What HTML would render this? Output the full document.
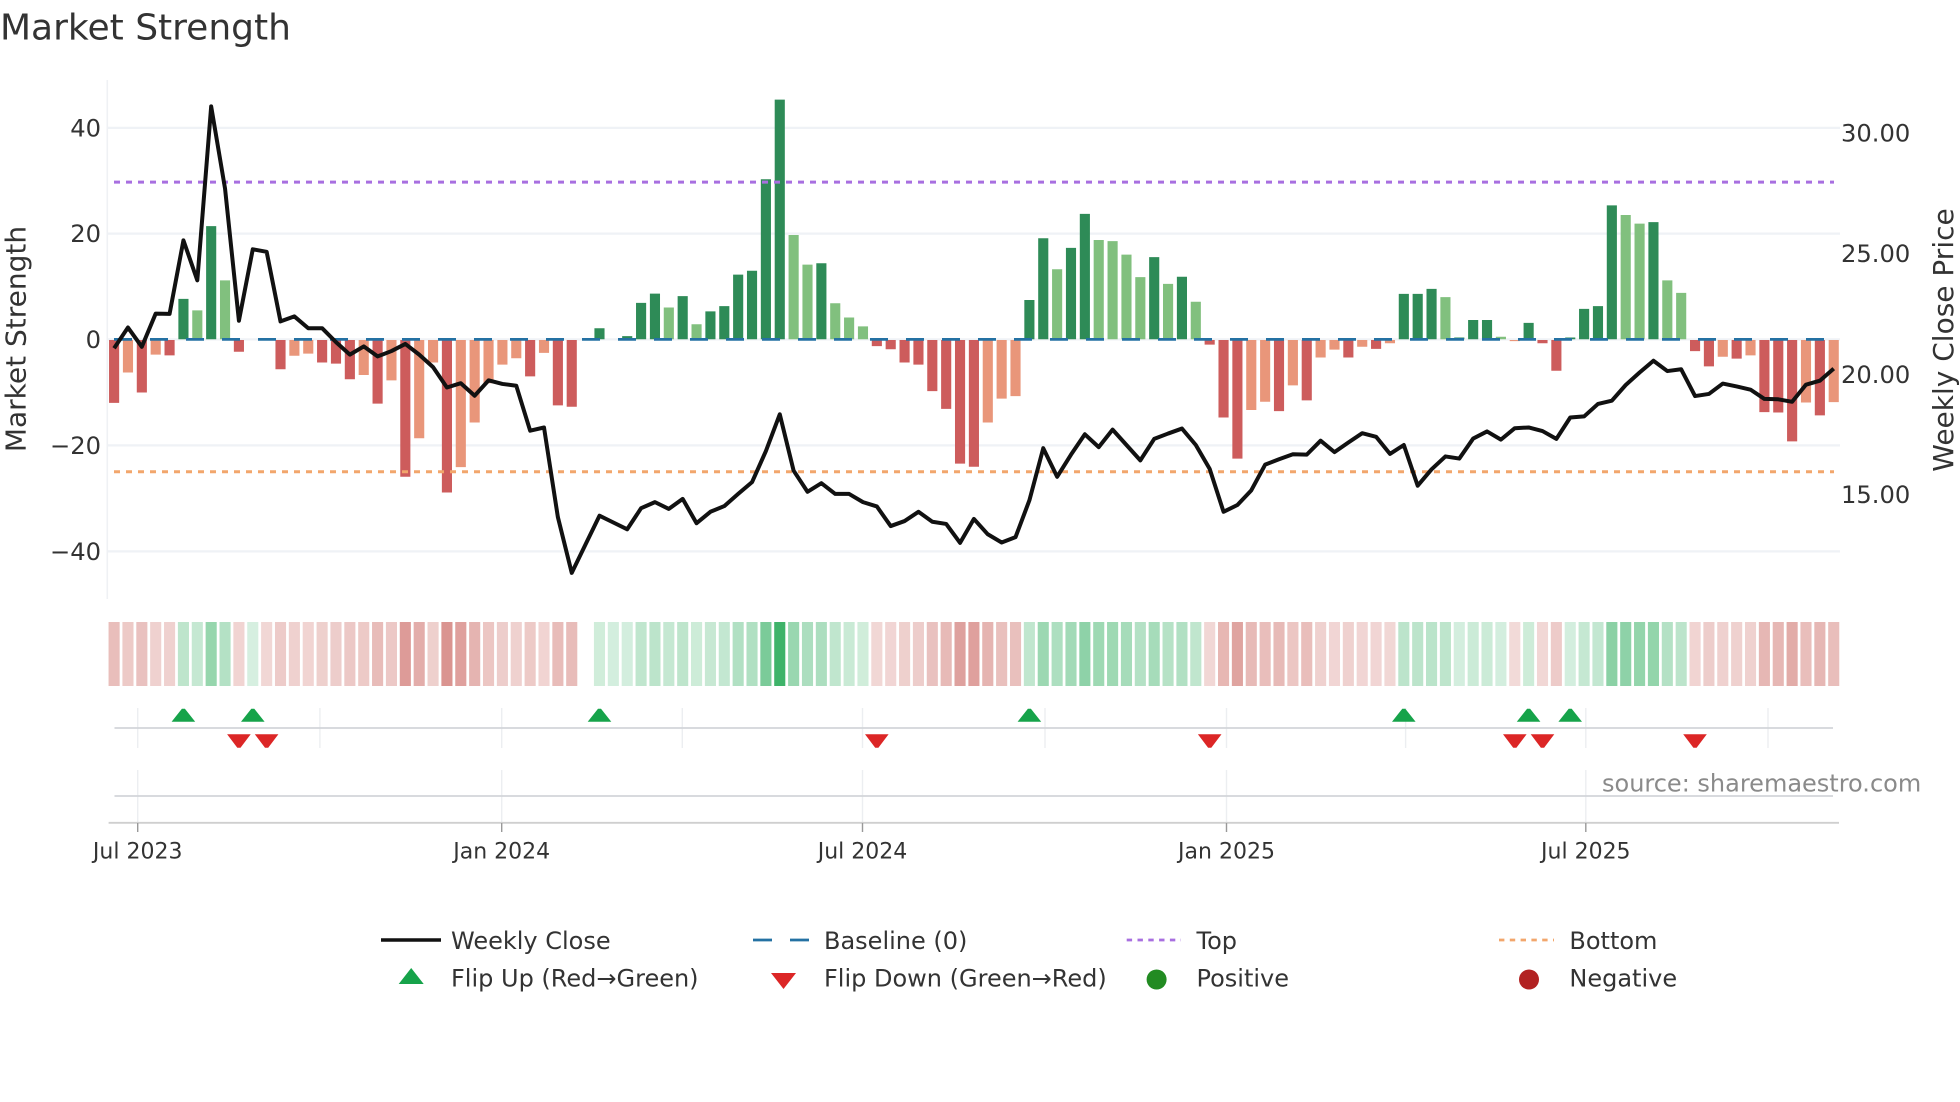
<!DOCTYPE html>
<html><head><meta charset="utf-8"><title>Market Strength</title>
<style>
html,body{margin:0;padding:0;background:#fff}
svg{display:block}
text{font-family:"DejaVu Sans","Liberation Sans",sans-serif;fill:#333}
.x{font-size:22px;text-anchor:middle}
</style></head><body>
<svg width="1960" height="1102" viewBox="0 0 1960 1102" xmlns="http://www.w3.org/2000/svg">
<rect width="1960" height="1102" fill="#fff"/>
<text x="0" y="39.5" style="font-size:36px">Market Strength</text>

<!-- gridlines -->
<g stroke="#eff2f6" stroke-width="2.2" fill="none">
<path d="M108 127.9H1840M108 233.6H1840M108 339.4H1840M108 445.4H1840M108 551.4H1840"/>
</g>
<path d="M107.3 80V599" stroke="#eff1f4" stroke-width="1.6"/>

<!-- bars: x = bar index, y = scaled -->
<g transform="translate(114.1,60) scale(13.868,0.35714)">
<g transform="translate(-.365,0)">
<path fill="#2e8b57" d="M5 669h.73V782h-.73zM7 465h.73V782h-.73zM35 751h.73V782h-.73zM37 773h.73V782h-.73zM38 680h.73V782h-.73zM39 654h.73V782h-.73zM41 661h.73V782h-.73zM43 704h.73V782h-.73zM44 689h.73V782h-.73zM45 601h.73V782h-.73zM46 590h.73V782h-.73zM47 334h.73V782h-.73zM48 111h.73V782h-.73zM51 569h.73V782h-.73zM66 672h.73V782h-.73zM67 499h.73V782h-.73zM69 526h.73V782h-.73zM70 431h.73V782h-.73zM75 552h.73V782h-.73zM77 607h.73V782h-.73zM93 655h.73V782h-.73zM94 655h.73V782h-.73zM95 641h.73V782h-.73zM97 777h.73V782h-.73zM98 728h.73V782h-.73zM99 728h.73V782h-.73zM102 736h.73V782h-.73zM105 777h.73V782h-.73zM106 697h.73V782h-.73zM107 689h.73V782h-.73zM108 407h.73V782h-.73zM111 454h.73V782h-.73z"/>
<path fill="#81c07e" d="M6 701h.73V782h-.73zM8 617h.73V782h-.73zM40 693h.73V782h-.73zM42 740h.73V782h-.73zM49 490h.73V782h-.73zM50 573h.73V782h-.73zM52 681h.73V782h-.73zM53 721h.73V782h-.73zM54 746h.73V782h-.73zM68 586h.73V782h-.73zM71 504h.73V782h-.73zM72 507h.73V782h-.73zM73 545h.73V782h-.73zM74 608h.73V782h-.73zM76 627h.73V782h-.73zM78 677h.73V782h-.73zM96 664h.73V782h-.73zM100 775h.73V782h-.73zM109 434h.73V782h-.73zM110 458h.73V782h-.73zM112 617h.73V782h-.73zM113 652h.73V782h-.73z"/>
<path fill="#cd5c5c" d="M0 784h.73V960h-.73zM2 784h.73V931h-.73zM4 784h.73V827h-.73zM9 784h.73V817h-.73zM12 784h.73V866h-.73zM15 784h.73V847h-.73zM16 784h.73V850h-.73zM17 784h.73V894h-.73zM19 784h.73V962h-.73zM21 784h.73V1167h-.73zM24 784h.73V1211h-.73zM30 784h.73V886h-.73zM32 784h.73V967h-.73zM33 784h.73V971h-.73zM55 784h.73V801h-.73zM56 784h.73V810h-.73zM57 784h.73V847h-.73zM58 784h.73V853h-.73zM59 784h.73V927h-.73zM60 784h.73V977h-.73zM61 784h.73V1130h-.73zM62 784h.73V1139h-.73zM79 784h.73V797h-.73zM80 784h.73V1001h-.73zM81 784h.73V1116h-.73zM84 784h.73V983h-.73zM86 784h.73V953h-.73zM89 784h.73V833h-.73zM91 784h.73V809h-.73zM103 784h.73V793h-.73zM104 784h.73V870h-.73zM114 784h.73V815h-.73zM115 784h.73V858h-.73zM117 784h.73V836h-.73zM119 784h.73V986h-.73zM120 784h.73V987h-.73zM121 784h.73V1068h-.73zM123 784h.73V995h-.73z"/>
<path fill="#e9967a" d="M1 784h.73V875h-.73zM3 784h.73V825h-.73zM13 784h.73V828h-.73zM14 784h.73V822h-.73zM18 784h.73V882h-.73zM20 784h.73V897h-.73zM22 784h.73V1059h-.73zM23 784h.73V847h-.73zM25 784h.73V1140h-.73zM26 784h.73V1015h-.73zM27 784h.73V905h-.73zM28 784h.73V853h-.73zM29 784h.73V835h-.73zM31 784h.73V820h-.73zM63 784h.73V1015h-.73zM64 784h.73V948h-.73zM65 784h.73V941h-.73zM82 784h.73V980h-.73zM83 784h.73V957h-.73zM85 784h.73V911h-.73zM87 784h.73V833h-.73zM88 784h.73V811h-.73zM90 784h.73V803h-.73zM92 784h.73V793h-.73zM101 784h.73V787h-.73zM116 784h.73V831h-.73zM118 784h.73V827h-.73zM122 784h.73V959h-.73zM124 784h.73V958h-.73z"/>
</g>
</g>

<!-- baseline + top + bottom lines -->
<path d="M114 339.4H1834" stroke="#2471a3" stroke-width="2.8" stroke-dasharray="18 18" fill="none"/>
<path d="M114 182.1H1834" stroke="#a86fe0" stroke-width="3" stroke-dasharray="6 6" fill="none"/>
<path d="M114 471.8H1834" stroke="#f2a66c" stroke-width="3" stroke-dasharray="6 6" fill="none"/>

<!-- weekly close line -->
<g transform="translate(114.1,60) scale(13.868,0.35714)">
<polyline vector-effect="non-scaling-stroke" fill="none" stroke="#111" stroke-width="4" stroke-linejoin="round" points="0,807 1,749 2,803 3,710 4,711 5,505 6,617 7,130 8,360 9,730 10,530 11,537 12,732 13,718 14,751 15,751 16,790 17,825 18,802 19,830 20,815 21,795 22,825 23,860 24,917 25,905 26,940 27,897 28,907 29,912 30,1038 31,1029 32,1280 33,1436 34,1356 35,1276 36,1295 37,1314 38,1255 39,1238 40,1257 41,1229 42,1297 43,1265 44,1249 45,1215 46,1182 47,1095 48,992 49,1150 50,1209 51,1185 52,1215 53,1215 54,1238 55,1250 56,1305 57,1291 58,1265 59,1293 60,1299 61,1352 62,1285 63,1328 64,1351 65,1336 66,1233 67,1087 68,1167 69,1105 70,1048 71,1084 72,1035 73,1078 74,1121 75,1061 76,1046 77,1032 78,1078 79,1145 80,1265 81,1246 82,1205 83,1133 84,1118 85,1104 86,1105 87,1066 88,1098 89,1071 90,1045 91,1055 92,1103 93,1078 94,1192 95,1146 96,1110 97,1116 98,1060 99,1040 100,1063 101,1031 102,1029 103,1039 104,1061 105,1001 106,998 107,963 108,954 109,910 110,875 111,842 112,871 113,866 114,941 115,935 116,906 117,914 118,923 119,949 120,950 121,957 122,909 123,898 124,864"/>
</g>

<!-- axis labels -->
<g style="font-size:24.2px;text-anchor:end">
<text x="101" y="136.4">40</text>
<text x="101" y="242.1">20</text>
<text x="101" y="347.9">0</text>
<text x="101" y="453.9">−20</text>
<text x="101" y="559.9">−40</text>
</g>
<g style="font-size:24.2px">
<text x="1841" y="141.6">30.00</text>
<text x="1841" y="262.2">25.00</text>
<text x="1841" y="382.8">20.00</text>
<text x="1841" y="503.2">15.00</text>
</g>
<text transform="translate(25.4,339) rotate(-90)" style="font-size:28px;text-anchor:middle">Market Strength</text>
<text transform="translate(1953,340) rotate(-90)" style="font-size:28px;text-anchor:middle">Weekly Close Price</text>

<!-- heat strip -->
<g transform="translate(114.1,622) scale(13.868,1)">
<g fill="#b5281f" opacity=".92">
<path d="M-.4 0h.8v64h-.8z" opacity=".33"/><path d="M.6 0h.8v64h-.8z" opacity=".27"/><path d="M1.6 0h.8v64h-.8z" opacity=".31"/><path d="M2.6 0h.8v64h-.8z" opacity=".23"/><path d="M3.6 0h.8v64h-.8z" opacity=".23"/>
<path d="M8.6 0h.8v64h-.8z" opacity=".22"/><path d="M10.6 0h.8v64h-.8z" opacity=".2"/><path d="M11.6 0h.8v64h-.8z" opacity=".26"/><path d="M12.6 0h.8v64h-.8z" opacity=".23"/><path d="M13.6 0h.8v64h-.8z" opacity=".22"/><path d="M14.6 0h.8v64h-.8z" opacity=".24"/><path d="M15.6 0h.8v64h-.8z" opacity=".25"/><path d="M16.6 0h.8v64h-.8z" opacity=".28"/><path d="M17.6 0h.8v64h-.8z" opacity=".27"/><path d="M18.6 0h.8v64h-.8z" opacity=".34"/><path d="M19.6 0h.8v64h-.8z" opacity=".28"/><path d="M20.6 0h.8v64h-.8z" opacity=".5"/><path d="M21.6 0h.8v64h-.8z" opacity=".41"/><path d="M22.6 0h.8v64h-.8z" opacity=".24"/><path d="M23.6 0h.8v64h-.8z" opacity=".54"/><path d="M24.6 0h.8v64h-.8z" opacity=".48"/><path d="M25.6 0h.8v64h-.8z" opacity=".38"/><path d="M26.6 0h.8v64h-.8z" opacity=".29"/><path d="M27.6 0h.8v64h-.8z" opacity=".25"/><path d="M28.6 0h.8v64h-.8z" opacity=".23"/><path d="M29.6 0h.8v64h-.8z" opacity=".27"/><path d="M30.6 0h.8v64h-.8z" opacity=".22"/><path d="M31.6 0h.8v64h-.8z" opacity=".34"/><path d="M32.6 0h.8v64h-.8z" opacity=".34"/>
<path d="M54.6 0h.8v64h-.8z" opacity=".2"/><path d="M55.6 0h.8v64h-.8z" opacity=".21"/><path d="M56.6 0h.8v64h-.8z" opacity=".24"/><path d="M57.6 0h.8v64h-.8z" opacity=".25"/><path d="M58.6 0h.8v64h-.8z" opacity=".31"/><path d="M59.6 0h.8v64h-.8z" opacity=".35"/><path d="M60.6 0h.8v64h-.8z" opacity=".47"/><path d="M61.6 0h.8v64h-.8z" opacity=".48"/><path d="M62.6 0h.8v64h-.8z" opacity=".38"/><path d="M63.6 0h.8v64h-.8z" opacity=".32"/><path d="M64.6 0h.8v64h-.8z" opacity=".32"/>
<path d="M78.6 0h.8v64h-.8z" opacity=".2"/><path d="M79.6 0h.8v64h-.8z" opacity=".37"/><path d="M80.6 0h.8v64h-.8z" opacity=".46"/><path d="M81.6 0h.8v64h-.8z" opacity=".35"/><path d="M82.6 0h.8v64h-.8z" opacity=".33"/><path d="M83.6 0h.8v64h-.8z" opacity=".35"/><path d="M84.6 0h.8v64h-.8z" opacity=".29"/><path d="M85.6 0h.8v64h-.8z" opacity=".33"/><path d="M86.6 0h.8v64h-.8z" opacity=".23"/><path d="M87.6 0h.8v64h-.8z" opacity=".21"/><path d="M88.6 0h.8v64h-.8z" opacity=".23"/><path d="M89.6 0h.8v64h-.8z" opacity=".21"/><path d="M90.6 0h.8v64h-.8z" opacity=".21"/><path d="M91.6 0h.8v64h-.8z" opacity=".2"/>
<path d="M100.6 0h.8v64h-.8z" opacity=".19"/><path d="M102.6 0h.8v64h-.8z" opacity=".2"/><path d="M103.6 0h.8v64h-.8z" opacity=".26"/>
<path d="M113.6 0h.8v64h-.8z" opacity=".22"/><path d="M114.6 0h.8v64h-.8z" opacity=".25"/><path d="M115.6 0h.8v64h-.8z" opacity=".23"/><path d="M116.6 0h.8v64h-.8z" opacity=".23"/><path d="M117.6 0h.8v64h-.8z" opacity=".23"/><path d="M118.6 0h.8v64h-.8z" opacity=".36"/><path d="M119.6 0h.8v64h-.8z" opacity=".36"/><path d="M120.6 0h.8v64h-.8z" opacity=".42"/><path d="M121.6 0h.8v64h-.8z" opacity=".33"/><path d="M122.6 0h.8v64h-.8z" opacity=".36"/><path d="M123.6 0h.8v64h-.8z" opacity=".33"/>
</g>
<g fill="#16a34a" opacity=".92">
<path d="M4.6 0h.8v64h-.8z" opacity=".3"/><path d="M5.6 0h.8v64h-.8z" opacity=".27"/><path d="M6.6 0h.8v64h-.8z" opacity=".49"/><path d="M7.6 0h.8v64h-.8z" opacity=".35"/><path d="M9.6 0h.8v64h-.8z" opacity=".19"/>
<path d="M34.6 0h.8v64h-.8z" opacity=".22"/><path d="M35.6 0h.8v64h-.8z" opacity=".2"/><path d="M36.6 0h.8v64h-.8z" opacity=".2"/><path d="M37.6 0h.8v64h-.8z" opacity=".29"/><path d="M38.6 0h.8v64h-.8z" opacity=".31"/><path d="M39.6 0h.8v64h-.8z" opacity=".27"/><path d="M40.6 0h.8v64h-.8z" opacity=".3"/><path d="M41.6 0h.8v64h-.8z" opacity=".23"/><path d="M42.6 0h.8v64h-.8z" opacity=".26"/><path d="M43.6 0h.8v64h-.8z" opacity=".28"/><path d="M44.6 0h.8v64h-.8z" opacity=".36"/><path d="M45.6 0h.8v64h-.8z" opacity=".37"/><path d="M46.6 0h.8v64h-.8z" opacity=".61"/><path d="M47.6 0h.8v64h-.8z" opacity=".9"/><path d="M48.6 0h.8v64h-.8z" opacity=".47"/><path d="M49.6 0h.8v64h-.8z" opacity=".39"/><path d="M50.6 0h.8v64h-.8z" opacity=".39"/><path d="M51.6 0h.8v64h-.8z" opacity=".29"/><path d="M52.6 0h.8v64h-.8z" opacity=".25"/><path d="M53.6 0h.8v64h-.8z" opacity=".22"/>
<path d="M65.6 0h.8v64h-.8z" opacity=".29"/><path d="M66.6 0h.8v64h-.8z" opacity=".46"/><path d="M67.6 0h.8v64h-.8z" opacity=".38"/><path d="M68.6 0h.8v64h-.8z" opacity=".43"/><path d="M69.6 0h.8v64h-.8z" opacity=".52"/><path d="M70.6 0h.8v64h-.8z" opacity=".45"/><path d="M71.6 0h.8v64h-.8z" opacity=".45"/><path d="M72.6 0h.8v64h-.8z" opacity=".41"/><path d="M73.6 0h.8v64h-.8z" opacity=".35"/><path d="M74.6 0h.8v64h-.8z" opacity=".41"/><path d="M75.6 0h.8v64h-.8z" opacity=".34"/><path d="M76.6 0h.8v64h-.8z" opacity=".36"/><path d="M77.6 0h.8v64h-.8z" opacity=".29"/>
<path d="M92.6 0h.8v64h-.8z" opacity=".31"/><path d="M93.6 0h.8v64h-.8z" opacity=".31"/><path d="M94.6 0h.8v64h-.8z" opacity=".32"/><path d="M95.6 0h.8v64h-.8z" opacity=".3"/><path d="M96.6 0h.8v64h-.8z" opacity=".2"/><path d="M97.6 0h.8v64h-.8z" opacity=".24"/><path d="M98.6 0h.8v64h-.8z" opacity=".24"/><path d="M99.6 0h.8v64h-.8z" opacity=".2"/>
<path d="M101.6 0h.8v64h-.8z" opacity=".23"/><path d="M104.6 0h.8v64h-.8z" opacity=".2"/><path d="M105.6 0h.8v64h-.8z" opacity=".27"/><path d="M106.6 0h.8v64h-.8z" opacity=".28"/><path d="M107.6 0h.8v64h-.8z" opacity=".54"/><path d="M108.6 0h.8v64h-.8z" opacity=".52"/><path d="M109.6 0h.8v64h-.8z" opacity=".5"/><path d="M110.6 0h.8v64h-.8z" opacity=".5"/><path d="M111.6 0h.8v64h-.8z" opacity=".35"/><path d="M112.6 0h.8v64h-.8z" opacity=".31"/>
</g>
</g>

<!-- flip subplot grid -->
<path fill="none" stroke="#eceef1" stroke-width="1.4" d="M137.7 708V748M319.9 708V748M501.7 708V748M682.3 708V748M862.5 708V748M1045 708V748M1226.5 708V748M1405.6 708V748M1585.8 708V748M1768 708V748"/>
<path fill="none" stroke="#eceef1" stroke-width="1.4" d="M137.7 770V823M501.7 770V823M862.5 770V823M1226.5 770V823M1585.8 770V823"/>
<path fill="none" stroke="#d2d5d9" stroke-width="1.8" d="M114.5 728H1833M114.5 796H1833"/>
<path fill="none" stroke="#cfcfcf" stroke-width="1.8" d="M108.6 822.8H1839"/>
<path fill="none" stroke="#999" stroke-width="1.4" d="M137.7 823V832M501.7 823V832M862.5 823V832M1226.5 823V832M1585.8 823V832"/>

<!-- flip triangles -->
<path fill="#16a34a" d="M171.6 721.7l10.3-13h3l10.3 13zM241 721.7l10.3-13h3l10.3 13zM587.7 721.7l10.3-13h3l10.3 13zM1017.6 721.7l10.3-13h3l10.3 13zM1392 721.7l10.3-13h3l10.3 13zM1516.8 721.7l10.3-13h3l10.3 13zM1558.4 721.7l10.3-13h3l10.3 13z"/>
<path fill="#dc2626" d="M227.1 734.3h23.6l-10.2 13.4h-3.2zM254.8 734.3h23.6l-10.2 13.4h-3.2zM865 734.3h23.6l-10.2 13.4h-3.2zM1197.9 734.3h23.6l-10.2 13.4h-3.2zM1503 734.3h23.6l-10.2 13.4h-3.2zM1530.7 734.3h23.6l-10.2 13.4h-3.2zM1683.2 734.3h23.6l-10.2 13.4h-3.2z"/>

<!-- x labels -->
<text class="x" x="137.7" y="858.3">Jul 2023</text>
<text class="x" x="501.7" y="858.3">Jan 2024</text>
<text class="x" x="862.5" y="858.3">Jul 2024</text>
<text class="x" x="1226.5" y="858.3">Jan 2025</text>
<text class="x" x="1585.8" y="858.3">Jul 2025</text>

<text x="1602" y="791.7" style="font-size:24px;fill:#8a8a8a">source: sharemaestro.com</text>

<!-- legend -->
<path d="M381 940H441" stroke="#111" stroke-width="3.6" fill="none"/>
<path d="M753 940H772M790 940H809" stroke="#2471a3" stroke-width="2.8" fill="none"/>
<path d="M1126.7 940H1181" stroke="#a86fe0" stroke-width="2.8" stroke-dasharray="5.4 5.4" fill="none"/>
<path d="M1499 940H1554" stroke="#f2a66c" stroke-width="2.8" stroke-dasharray="5.4 5.4" fill="none"/>
<path fill="#16a34a" d="M398.7 984l12.5-16 12.5 16z"/>
<path fill="#dc2626" d="M771 973h25l-12.5 16z"/>
<circle cx="1156.6" cy="979.5" r="10" fill="#228b22"/>
<circle cx="1529" cy="979.5" r="10" fill="#b22222"/>
<g style="font-size:24px">
<text x="451" y="949">Weekly Close</text>
<text x="824" y="949">Baseline (0)</text>
<text x="1196.5" y="949">Top</text>
<text x="1569.4" y="949">Bottom</text>
<text x="451" y="986.7">Flip Up (Red→Green)</text>
<text x="824" y="986.7">Flip Down (Green→Red)</text>
<text x="1196.5" y="986.7">Positive</text>
<text x="1569.4" y="986.7">Negative</text>
</g>
</svg>
</body></html>
